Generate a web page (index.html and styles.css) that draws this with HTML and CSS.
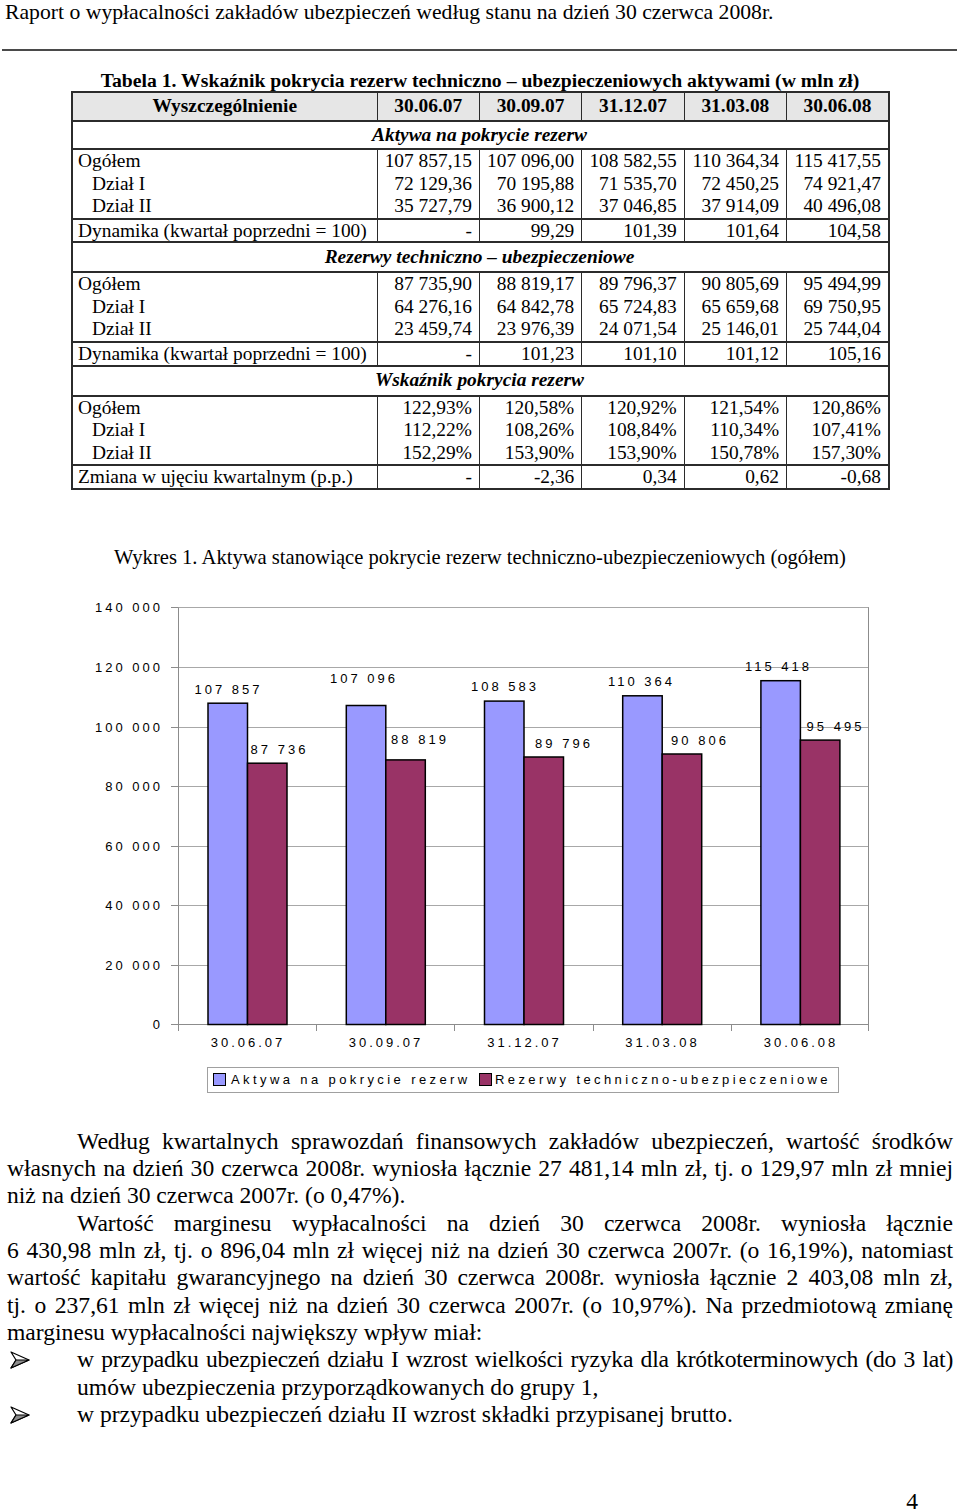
FILE: index.html
```html
<!DOCTYPE html>
<html lang="pl">
<head>
<meta charset="utf-8">
<title>Raport o wypłacalności</title>
<link rel="stylesheet" href="styles.css">
</head>
<body>
<div class="page">
  <header class="running-head"><span>Raport o wypłacalności zakładów ubezpieczeń według stanu na dzień 30 czerwca 2008r.</span></header>

  <h1 class="table-title">Tabela 1. Wskaźnik pokrycia rezerw techniczno – ubezpieczeniowych aktywami (w mln zł)</h1>
  <table class="data">
    <colgroup>
      <col class="c-label"><col class="c-num"><col class="c-num"><col class="c-num"><col class="c-num"><col class="c-num">
    </colgroup>
    <thead>
      <tr><th>Wyszczególnienie</th><th>30.06.07</th><th>30.09.07</th><th>31.12.07</th><th>31.03.08</th><th>30.06.08</th></tr>
    </thead>
    <tbody>
      <tr class="section s1"><td colspan="6">Aktywa na pokrycie rezerw</td></tr>
      <tr class="group">
        <td class="label">Ogółem<br><span class="ind">Dział I</span><br><span class="ind">Dział II</span></td>
        <td>107 857,15<br>72 129,36<br>35 727,79</td>
        <td>107 096,00<br>70 195,88<br>36 900,12</td>
        <td>108 582,55<br>71 535,70<br>37 046,85</td>
        <td>110 364,34<br>72 450,25<br>37 914,09</td>
        <td>115 417,55<br>74 921,47<br>40 496,08</td>
      </tr>
      <tr class="single"><td class="label">Dynamika (kwartał poprzedni = 100)</td><td>-</td><td>99,29</td><td>101,39</td><td>101,64</td><td>104,58</td></tr>
      <tr class="section"><td colspan="6">Rezerwy techniczno – ubezpieczeniowe</td></tr>
      <tr class="group">
        <td class="label">Ogółem<br><span class="ind">Dział I</span><br><span class="ind">Dział II</span></td>
        <td>87 735,90<br>64 276,16<br>23 459,74</td>
        <td>88 819,17<br>64 842,78<br>23 976,39</td>
        <td>89 796,37<br>65 724,83<br>24 071,54</td>
        <td>90 805,69<br>65 659,68<br>25 146,01</td>
        <td>95 494,99<br>69 750,95<br>25 744,04</td>
      </tr>
      <tr class="single"><td class="label">Dynamika (kwartał poprzedni = 100)</td><td>-</td><td>101,23</td><td>101,10</td><td>101,12</td><td>105,16</td></tr>
      <tr class="section"><td colspan="6">Wskaźnik pokrycia rezerw</td></tr>
      <tr class="group">
        <td class="label">Ogółem<br><span class="ind">Dział I</span><br><span class="ind">Dział II</span></td>
        <td>122,93%<br>112,22%<br>152,29%</td>
        <td>120,58%<br>108,26%<br>153,90%</td>
        <td>120,92%<br>108,84%<br>153,90%</td>
        <td>121,54%<br>110,34%<br>150,78%</td>
        <td>120,86%<br>107,41%<br>157,30%</td>
      </tr>
      <tr class="single"><td class="label">Zmiana w ujęciu kwartalnym (p.p.)</td><td>-</td><td>-2,36</td><td>0,34</td><td>0,62</td><td>-0,68</td></tr>
    </tbody>
  </table>

  <p class="chart-title">Wykres 1. Aktywa stanowiące pokrycie rezerw techniczno-ubezpieczeniowych (ogółem)</p>

  <svg class="chart" width="960" height="510" viewBox="0 590 960 510" xmlns="http://www.w3.org/2000/svg">
    <g class="grid">
      <line x1="178" y1="606.5" x2="869" y2="606.5"/>
      <line x1="178" y1="666.5" x2="869" y2="666.5"/>
      <line x1="178" y1="726.5" x2="869" y2="726.5"/>
      <line x1="178" y1="785.5" x2="869" y2="785.5"/>
      <line x1="178" y1="845.5" x2="869" y2="845.5"/>
      <line x1="178" y1="904.5" x2="869" y2="904.5"/>
      <line x1="178" y1="964.5" x2="869" y2="964.5"/>
    </g>
    <g class="axis">
      <line x1="178.5" y1="606.5" x2="178.5" y2="1024"/>
      <line x1="868.5" y1="606.5" x2="868.5" y2="1024"/>
      <line x1="171" y1="1023.5" x2="869" y2="1023.5"/>
      <line x1="171" y1="606.5" x2="178" y2="606.5"/>
      <line x1="171" y1="666.5" x2="178" y2="666.5"/>
      <line x1="171" y1="726.5" x2="178" y2="726.5"/>
      <line x1="171" y1="785.5" x2="178" y2="785.5"/>
      <line x1="171" y1="845.5" x2="178" y2="845.5"/>
      <line x1="171" y1="904.5" x2="178" y2="904.5"/>
      <line x1="171" y1="964.5" x2="178" y2="964.5"/>
      <line x1="178.5" y1="1023.5" x2="178.5" y2="1030"/>
      <line x1="316.5" y1="1023.5" x2="316.5" y2="1030"/>
      <line x1="454.5" y1="1023.5" x2="454.5" y2="1030"/>
      <line x1="593.5" y1="1023.5" x2="593.5" y2="1030"/>
      <line x1="731.5" y1="1023.5" x2="731.5" y2="1030"/>
      <line x1="868.5" y1="1023.5" x2="868.5" y2="1030"/>
    </g>
    <g class="ylabels">
      <text x="163" y="611">140 000</text>
      <text x="163" y="671">120 000</text>
      <text x="163" y="731">100 000</text>
      <text x="163" y="790">80 000</text>
      <text x="163" y="850">60 000</text>
      <text x="163" y="909">40 000</text>
      <text x="163" y="969">20 000</text>
      <text x="163" y="1028">0</text>
    </g>
    <g class="bars">
      <rect class="b1" x="208" y="702.2" width="39.5" height="321.3"/>
      <rect class="b2" x="247.5" y="762.2" width="39.5" height="261.3"/>
      <rect class="b1" x="346.3" y="704.5" width="39.5" height="319"/>
      <rect class="b2" x="385.8" y="758.9" width="39.5" height="264.6"/>
      <rect class="b1" x="484.5" y="700.1" width="39.5" height="323.4"/>
      <rect class="b2" x="524" y="756" width="39.5" height="267.5"/>
      <rect class="b1" x="622.7" y="694.8" width="39.5" height="328.7"/>
      <rect class="b2" x="662.2" y="753" width="39.5" height="270.5"/>
      <rect class="b1" x="760.9" y="679.7" width="39.5" height="343.8"/>
      <rect class="b2" x="800.4" y="739.1" width="39.5" height="284.4"/>
    </g>
    <g class="dlabels">
      <text x="228.5" y="692.5">107 857</text>
      <text x="279.5" y="752.5">87 736</text>
      <text x="364" y="681.5">107 096</text>
      <text x="420" y="742.5">88 819</text>
      <text x="505" y="689.5">108 583</text>
      <text x="564" y="746.5">89 796</text>
      <text x="641.5" y="685">110 364</text>
      <text x="700" y="743.5">90 806</text>
      <text x="778.5" y="670">115 418</text>
      <text x="835.5" y="729.5">95 495</text>
    </g>
    <g class="xlabels">
      <text x="248" y="1046">30.06.07</text>
      <text x="386" y="1046">30.09.07</text>
      <text x="524.5" y="1046">31.12.07</text>
      <text x="662.5" y="1046">31.03.08</text>
      <text x="801" y="1046">30.06.08</text>
    </g>
    <g class="legend">
      <rect class="frame" x="207.5" y="1066.5" width="631" height="25"/>
      <rect class="b1" x="213.5" y="1072.5" width="12" height="12"/>
      <text x="231" y="1083">Aktywa na pokrycie rezerw</text>
      <rect class="b2" x="479.5" y="1072.5" width="12" height="12"/>
      <text x="495" y="1083">Rezerwy techniczno-ubezpieczeniowe</text>
    </g>
  </svg>

  <div class="text">
    <p class="para">
      <span class="line just first">Według kwartalnych sprawozdań finansowych zakładów ubezpieczeń, wartość środków</span>
      <span class="line just">własnych na dzień 30 czerwca 2008r. wyniosła łącznie 27 481,14 mln zł, tj. o 129,97 mln zł mniej</span>
      <span class="line">niż na dzień 30 czerwca 2007r. (o 0,47%).</span>
    </p>
    <p class="para">
      <span class="line just first">Wartość marginesu wypłacalności na dzień 30 czerwca 2008r. wyniosła łącznie</span>
      <span class="line just">6 430,98 mln zł, tj. o 896,04 mln zł więcej niż na dzień 30 czerwca 2007r. (o 16,19%), natomiast</span>
      <span class="line just">wartość kapitału gwarancyjnego na dzień 30 czerwca 2008r. wyniosła łącznie 2 403,08 mln zł,</span>
      <span class="line just">tj. o 237,61 mln zł więcej niż na dzień 30 czerwca 2007r. (o 10,97%). Na przedmiotową zmianę</span>
      <span class="line">marginesu wypłacalności największy wpływ miał:</span>
    </p>
    <ul class="bullets">
      <li>
        <svg class="arrow" width="20" height="18" viewBox="0 0 20 18"><polygon points="1,1 19,9 1,17 6,9" fill="#fff" stroke="#000" stroke-width="1.2" stroke-linejoin="round"/><polygon points="6,9 19,9 1,17" fill="#8c8c8c" stroke="#000" stroke-width="1.2" stroke-linejoin="round"/></svg>
        <div class="item">
          <span class="line just tight">w przypadku ubezpieczeń działu I wzrost wielkości ryzyka dla krótkoterminowych (do 3 lat)</span>
          <span class="line">umów ubezpieczenia przyporządkowanych do grupy 1,</span>
        </div>
      </li>
      <li>
        <svg class="arrow" width="20" height="18" viewBox="0 0 20 18"><polygon points="1,1 19,9 1,17 6,9" fill="#fff" stroke="#000" stroke-width="1.2" stroke-linejoin="round"/><polygon points="6,9 19,9 1,17" fill="#8c8c8c" stroke="#000" stroke-width="1.2" stroke-linejoin="round"/></svg>
        <div class="item">
          <span class="line">w przypadku ubezpieczeń działu II wzrost składki przypisanej brutto.</span>
        </div>
      </li>
    </ul>
  </div>

  <div class="page-no">4</div>
</div>
</body>
</html>
```

FILE: styles.css
```css
* { box-sizing: border-box; }
html, body { margin: 0; padding: 0; background: #fff; }
body {
  font-family: "Liberation Serif", "Times New Roman", serif;
  color: #000;
  width: 960px;
}
.page { width: 960px; height: 1512px; position: relative; }

.running-head {
  margin: 0 3px 0 2px;
  height: 51px;
  padding: 0 0 0 3px;
  border-bottom: 2px solid #4a4a4a;
  font-size: 21.7px;
  line-height: 24px;
}

.table-title {
  margin: 18px 0 0 0;
  font-size: 19.7px;
  line-height: 22px;
  font-weight: bold;
  text-align: center;
}

table.data {
  margin: 0 0 0 71px;
  border-collapse: collapse;
  font-size: 19.4px;
  line-height: 22.6px;
  border: 2px solid #2b2b2b;
}
col.c-label { width: 305px; }
col.c-num { width: 102.4px; }
table.data th, table.data td {
  border-left: 1px solid #2b2b2b;
  border-right: 1px solid #2b2b2b;
  padding: 0 7px 0 5px;
  white-space: nowrap;
}
table.data thead th {
  background: #e6e6e6;
  text-align: center;
  font-weight: bold;
  height: 29px;
  padding: 0;
  border-bottom: 2px solid #2b2b2b;
}
table.data td { text-align: right; vertical-align: middle; }
table.data td.label { text-align: left; }
.ind { padding-left: 14px; }
tr.section td {
  text-align: center;
  font-style: italic;
  font-weight: bold;
  height: 30px;
  border-top: 2px solid #2b2b2b;
  border-bottom: 2px solid #2b2b2b;
}
tr.section.s1 td { height: 28px; }
tr.group td { height: 67px; border-top: 2px solid #2b2b2b; }
tr.single td { height: 20px; line-height: 21.5px; border-top: 2px solid #2b2b2b; }

.chart-title {
  margin: 56px 0 0 0;
  font-size: 20.6px;
  line-height: 22px;
  text-align: center;
}

svg.chart { display: block; margin-top: 23px; }
.chart .grid line { stroke: #a8a8a8; stroke-width: 1; }
.chart .axis line { stroke: #8c8c8c; stroke-width: 1; }
.chart text {
  font-family: "Liberation Sans", Arial, sans-serif;
  font-size: 13px;
  letter-spacing: 3px;
  fill: #000;
}
.chart .ylabels text { text-anchor: end; }
.chart .dlabels text, .chart .xlabels text { text-anchor: middle; }
.chart .legend text { letter-spacing: 3.4px; }
.chart .bars rect { stroke: #000; stroke-width: 1.5; }
.chart .b1 { fill: #9999ff; }
.chart .b2 { fill: #993366; }
.chart .legend .b1, .chart .legend .b2 { stroke: #000; stroke-width: 1; }
.chart .legend .frame { fill: #fff; stroke: #a0a0a0; stroke-width: 1; }

.text {
  margin: 27px 7px 0 7px;
  font-size: 23.6px;
  line-height: 27.3px;
}
.para { margin: 0; }
.line { display: block; white-space: nowrap; }
.line.just { text-align: justify; text-align-last: justify; white-space: normal; }
.line.just.tight { letter-spacing: -0.25px; }
.line.first { padding-left: 70px; }

.bullets { list-style: none; margin: 0; padding: 0; }
.bullets li { display: grid; grid-template-columns: 70px 1fr; align-items: start; }
.bullets .arrow { margin: 5px 0 0 3px; }

.page-no {
  position: absolute;
  right: 42px;
  top: 1490px;
  font-size: 23.6px;
  line-height: 22px;
}
```
